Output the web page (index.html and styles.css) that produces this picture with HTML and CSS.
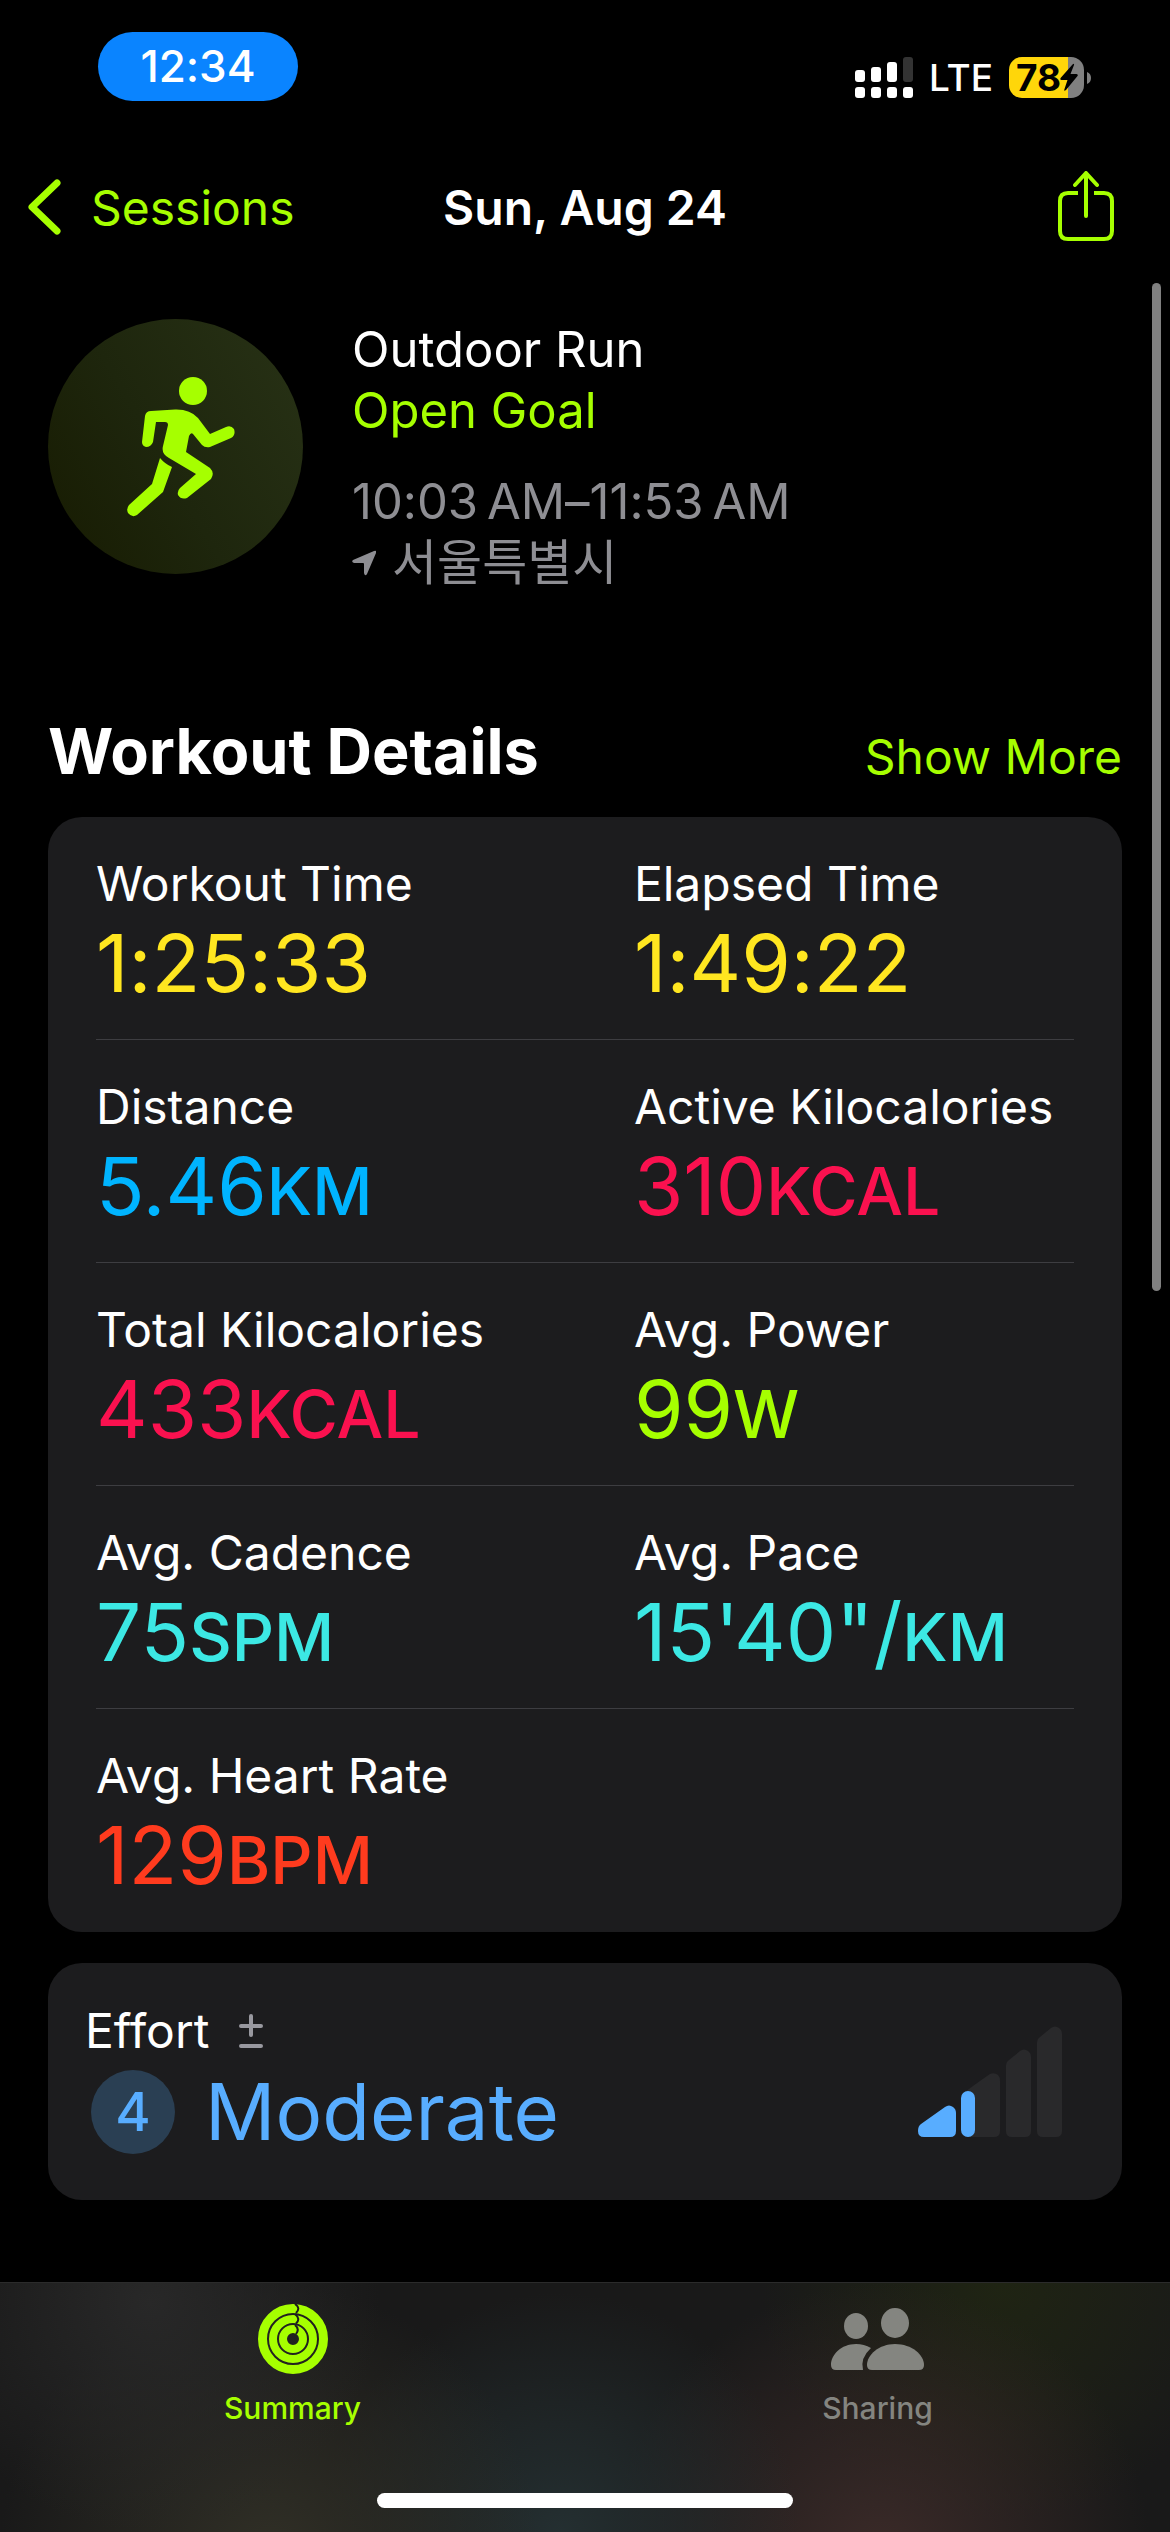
FILE: index.html
```html
<!DOCTYPE html>
<html lang="en">
<head>
<meta charset="utf-8">
<meta name="viewport" content="width=device-width, initial-scale=1">
<title>Sun, Aug 24</title>
<link rel="stylesheet" href="styles.css">
</head>
<body>
<header class="status">
  <span class="status-time">12:34</span>
  <div class="status-right">
    <svg class="signal" width="58" height="41" viewBox="0 0 58 41" fill="#fff" aria-hidden="true">
      <rect x="0" y="13" width="10" height="12" rx="3"/><rect x="16" y="10" width="10" height="15" rx="3"/><rect x="32" y="5" width="10" height="20" rx="3"/><rect x="48" y="0" width="10" height="25" rx="3" fill="#333"/>
      <rect x="0" y="30" width="10" height="11" rx="3"/><rect x="16" y="30" width="10" height="11" rx="3"/><rect x="32" y="30" width="10" height="11" rx="3"/><rect x="48" y="30" width="10" height="11" rx="3"/>
    </svg>
    <span class="carrier">LTE</span>
    <span class="battery">
      <span class="battery-level">78</span>
      <svg class="bolt" width="18" height="29" viewBox="0 0 18 29" aria-hidden="true"><path d="M12.500 1.500Q14.500 0 14 2L10.500 11H16.500Q18.500 11.500 17.500 13L6 27Q3.500 29 4.500 26L7.500 17H1.500Q-.5 16.500 .8 14.800Z" fill="#000"/></svg>
    </span>
    <svg class="battery-nub" width="4" height="12" viewBox="0 0 4 12" aria-hidden="true"><path d="M0 0Q4 1.500 4 6T0 12Z" fill="#808080"/></svg>
  </div>
</header>

<nav class="navbar">
  <a class="back" href="#sessions">
    <svg width="36" height="60" viewBox="0 0 36 60" fill="none" stroke="currentColor" stroke-width="7" stroke-linecap="round" stroke-linejoin="round" aria-hidden="true"><path d="M30 6L5 30L30 54"/></svg>
    Sessions
  </a>
  <h1 class="nav-title">Sun, Aug 24</h1>
  <button class="share" type="button" aria-label="Share">
    <svg width="58" height="72" viewBox="0 0 58 72" fill="none" stroke="currentColor" stroke-width="4" stroke-linecap="round" stroke-linejoin="round" aria-hidden="true"><path d="M29 3V45M18 14L29 2L40 14"/><path d="M21 22H11Q3 22 3 30V60Q3 68 11 68H47Q55 68 55 60V30Q55 22 47 22H37" stroke-linecap="butt"/></svg>
  </button>
</nav>

<main class="content">
  <section class="workout">
    <div class="badge">
      <svg width="118" height="140" viewBox="-10 0 118 140" fill="#a6ff00" aria-hidden="true">
        <circle cx="66" cy="14" r="14"/>
        <path d="M24 34L48 32.500Q63 32 71 41L83 57L99 50Q104 48 107 52Q109 58 104 61L83 70Q78 71 75 68L66 57Q64 55 62 59L59 75L83 91Q88 96 84 102L60 121Q54 123 51 118Q50 114 53 111L69 97L42 81Q34 77 36 69L41 48Q41 45 38 45H29L26 65Q24 70 19 70Q15 69 15 65L18 39Q19 34 24 34Z"/>
        <path d="M33 81Q38 87 45 90L36 115L10 138Q5 141 1 136Q-1 132 2 128L25 107Z"/>
      </svg>
    </div>
    <div class="workout-info">
      <p class="line">Outdoor Run</p>
      <p class="line goal">Open Goal</p>
      <p class="line muted times">10:03&#8201;AM–11:53&#8201;AM</p>
      <p class="line muted place">
        <svg width="24" height="26" viewBox="0 0 24 26" fill="currentColor" aria-hidden="true"><path d="M22 1Q25 0 24 3L15 24Q13 27 12 23V14Q12 13 11 13H2Q-1 12 1 10Z"/></svg>
        <span lang="ko">서울특별시</span>
      </p>
    </div>
  </section>

  <div class="section-head">
    <h2>Workout Details</h2>
    <a href="#more">Show More</a>
  </div>

  <dl class="card metrics">
    <div class="metric yellow"><dt>Workout Time</dt><dd>1:25:33</dd></div>
    <div class="metric yellow"><dt>Elapsed Time</dt><dd>1:49:22</dd></div>
    <div class="metric blue"><dt>Distance</dt><dd>5.46<span class="unit">KM</span></dd></div>
    <div class="metric pink"><dt>Active Kilocalories</dt><dd>310<span class="unit">KCAL</span></dd></div>
    <div class="metric pink"><dt>Total Kilocalories</dt><dd>433<span class="unit">KCAL</span></dd></div>
    <div class="metric lime"><dt>Avg. Power</dt><dd>99<span class="unit">W</span></dd></div>
    <div class="metric teal"><dt>Avg. Cadence</dt><dd>75<span class="unit">SPM</span></dd></div>
    <div class="metric teal"><dt>Avg. Pace</dt><dd>15'40"/<span class="unit">KM</span></dd></div>
    <div class="metric red"><dt>Avg. Heart Rate</dt><dd>129<span class="unit">BPM</span></dd></div>
  </dl>

  <section class="card effort">
    <div class="effort-text">
      <h3>Effort
        <svg width="24" height="34" viewBox="0 0 24 34" stroke="#98989f" stroke-width="4" stroke-linecap="round" aria-hidden="true"><path d="M12 2V21M2 12H22M2 32H22"/></svg>
      </h3>
      <p class="effort-value"><span class="effort-score">4</span>Moderate</p>
    </div>
    <svg class="effort-bars" width="144" height="112" viewBox="0 0 144 112" fill="#29292b" aria-hidden="true">
      <path d="M3 98L27 81Q31 78 35 81Q38 83 38 87V105Q38 111 32 111H6Q0 111 0 105Q0 100 3 98Z" fill="#58adff"/>
      <path d="M44 69Q46 66 72 48Q76 46 80 49Q82 51 82 55V105Q82 111 76 111H50Q44 111 44 105Z"/>
      <rect x="43" y="65" width="14" height="46" rx="7" fill="#58adff"/>
      <path d="M88 40Q88 36 91 34L102 25Q106 22 110 25Q113 27 113 31V105Q113 111 107 111H94Q88 111 88 105Z"/>
      <path d="M119 17Q119 13 122 11L133 2Q137-1 141 2Q144 4 144 8V105Q144 111 138 111H125Q119 111 119 105Z"/>
    </svg>
  </section>
</main>

<footer class="tabbar">
  <nav class="tabs">
    <a class="tab active" href="#summary">
      <svg width="70" height="70" viewBox="0 0 70 70" fill="none" aria-hidden="true">
        <g stroke="currentColor">
          <circle cx="35" cy="35" r="30.500" stroke-width="9"/><circle cx="35" cy="35" r="20" stroke-width="8"/><circle cx="35" cy="35" r="10" stroke-width="8"/>
        </g>
        <path d="M37 0Q43 4 38 9M37 10Q43 15 38 19.500M37 21Q42 25 38 30" stroke="#1c1c1c" stroke-width="2"/>
      </svg>
      Summary
    </a>
    <a class="tab" href="#sharing">
      <svg width="94" height="70" viewBox="0 0 94 70" fill="currentColor" aria-hidden="true">
        <ellipse cx="25" cy="22" rx="12" ry="13"/><ellipse cx="64" cy="19" rx="14" ry="15"/>
        <path d="M40 44Q33 40 25 40C10 40 0 51 0 61Q0 66 5 66H32Q29 54 40 44Z"/>
        <path d="M64 40C48 40 36 51 36 61Q36 66 41 66H88Q93 66 93 61C93 51 81 40 64 40Z"/>
      </svg>
      Sharing
    </a>
  </nav>
  <div class="home-indicator"></div>
</footer>
<div class="scroll-indicator"></div>
</body>
</html>
```
FILE: styles.css
```css
* { box-sizing: border-box; }

body {
  position: relative;
  display: flex;
  flex-direction: column;
  min-height: 100vh;
  margin: 0;
  background: #000;
  color: #fff;
  font-family: Inter, "Noto Sans CJK KR", sans-serif;
  font-size: 48px;
  font-variant-ligatures: none;
  line-height: 61px;
}

h1, h2, h3, p, dl, dd { margin: 0; }
h1, h3 { font-size: inherit; }
a { color: #a6ff00; text-decoration: none; }

.status {
  display: flex;
  justify-content: space-between;
  align-items: flex-start;
  padding: 32px 79px 0 98px;
}
.status-time {
  width: 200px;
  border-radius: 35px;
  background: #0a84ff;
  font-size: 44px;
  font-weight: 500;
  line-height: 69px;
  text-align: center;
}
.status-right {
  display: flex;
  align-items: center;
  padding-top: 25px;
}
.carrier {
  margin: 0 16px;
  font-size: 37px;
  font-weight: 500;
  line-height: 41px;
}
.battery {
  display: flex;
  align-items: center;
  width: 75px;
  height: 41px;
  margin-right: 3px;
  padding-left: 7px;
  border-radius: 13px;
  background: linear-gradient(90deg, #ffd60a 59px, #808080 59px);
  color: #000;
  font-size: 37px;
  font-weight: 700;
  line-height: 41px;
}
.battery-level { width: 44px; }

.navbar {
  display: grid;
  grid-template-columns: 1fr auto 1fr;
  align-items: center;
  height: 120px;
  margin-top: 46px;
  padding: 0 27px;
}
.back {
  display: flex;
  align-items: center;
  gap: 28px;
}
.nav-title { font-weight: 600; }
.share {
  justify-self: end;
  display: flex;
  margin-right: 28px;
  padding: 0;
  border: 0;
  background: none;
  color: #a6ff00;
}

.content { padding: 52px 48px 0; }

.workout {
  display: flex;
  gap: 49px;
}
.badge {
  display: flex;
  align-items: center;
  justify-content: center;
  width: 255px;
  height: 255px;
  border-radius: 50%;
  background: linear-gradient(60deg, #171b01, #1e260d 45%, #283216);
}
.line { font-size: 49px; }
.goal { color: #a6ff00; }
.muted { color: #8e8e93; }
.times { margin-top: 30px; }
.place {
  display: flex;
  align-items: center;
  gap: 16px;
}

.section-head {
  display: flex;
  justify-content: space-between;
  align-items: baseline;
  padding: 118px 0 26px;
}
.section-head h2 {
  font-size: 63px;
  font-weight: 700;
  line-height: 80px;
}

.card {
  border-radius: 34px;
  background: #1c1c1e;
}
.metrics {
  display: grid;
  grid-template-columns: 11fr 9fr;
  padding: 0 48px;
}
.metric {
  height: 223px;
  padding-top: 36px;
  border-bottom: 1px solid #3d3d41;
}
.metric:last-child { border-bottom: 0; }
.metric dd {
  font-size: 80px;
  line-height: 98px;
}
.unit {
  font-size: 66px;
  font-weight: 500;
}
.yellow dd { color: #ffe620; }
.blue dd { color: #00b4ff; }
.pink dd { color: #fa114f; }
.lime dd { color: #a6ff00; }
.teal dd { color: #3ce8e4; }
.red dd { color: #ff3b1e; }

.effort {
  display: flex;
  justify-content: space-between;
  align-items: center;
  margin-top: 31px;
  padding: 37px 60px 37px 37px;
}
.effort h3 {
  display: flex;
  align-items: center;
  gap: 30px;
  font-weight: 400;
}
.effort-value {
  display: flex;
  align-items: center;
  gap: 30px;
  padding-left: 6px;
  color: #58adff;
  font-size: 78px;
  line-height: 102px;
}
.effort-score {
  width: 84px;
  border-radius: 50%;
  background: #2a3f53;
  font-size: 54px;
  font-weight: 500;
  line-height: 84px;
  text-align: center;
}

.tabbar {
  display: flex;
  flex-direction: column;
  align-items: center;
  justify-content: space-between;
  height: 250px;
  margin-top: auto;
  padding: 21px 0 24px;
  border-top: 1px solid #2b2b2b;
  background:
    radial-gradient(circle at 150px 20px, #282828, transparent 230px),
    radial-gradient(circle at 270px 270px, #302f26, transparent 270px),
    radial-gradient(circle at 560px 250px, #242f31, transparent 240px),
    radial-gradient(circle at 880px 270px, #3a2a28, transparent 270px),
    radial-gradient(circle at 1000px 0, #1f2413, transparent 240px),
    #191919;
}
.tabs {
  display: flex;
  width: 100%;
}
.tab {
  display: flex;
  flex: 1;
  flex-direction: column;
  align-items: center;
  gap: 14px;
  color: #848580;
  font-size: 30px;
  font-weight: 500;
  line-height: 40px;
}
.tab.active { color: #a6ff00; }
.home-indicator {
  width: 416px;
  height: 15px;
  border-radius: 8px;
  background: #fff;
}

.scroll-indicator {
  position: absolute;
  top: 283px;
  right: 9px;
  width: 9px;
  height: 1008px;
  border-radius: 5px;
  background: #808080;
}
```
